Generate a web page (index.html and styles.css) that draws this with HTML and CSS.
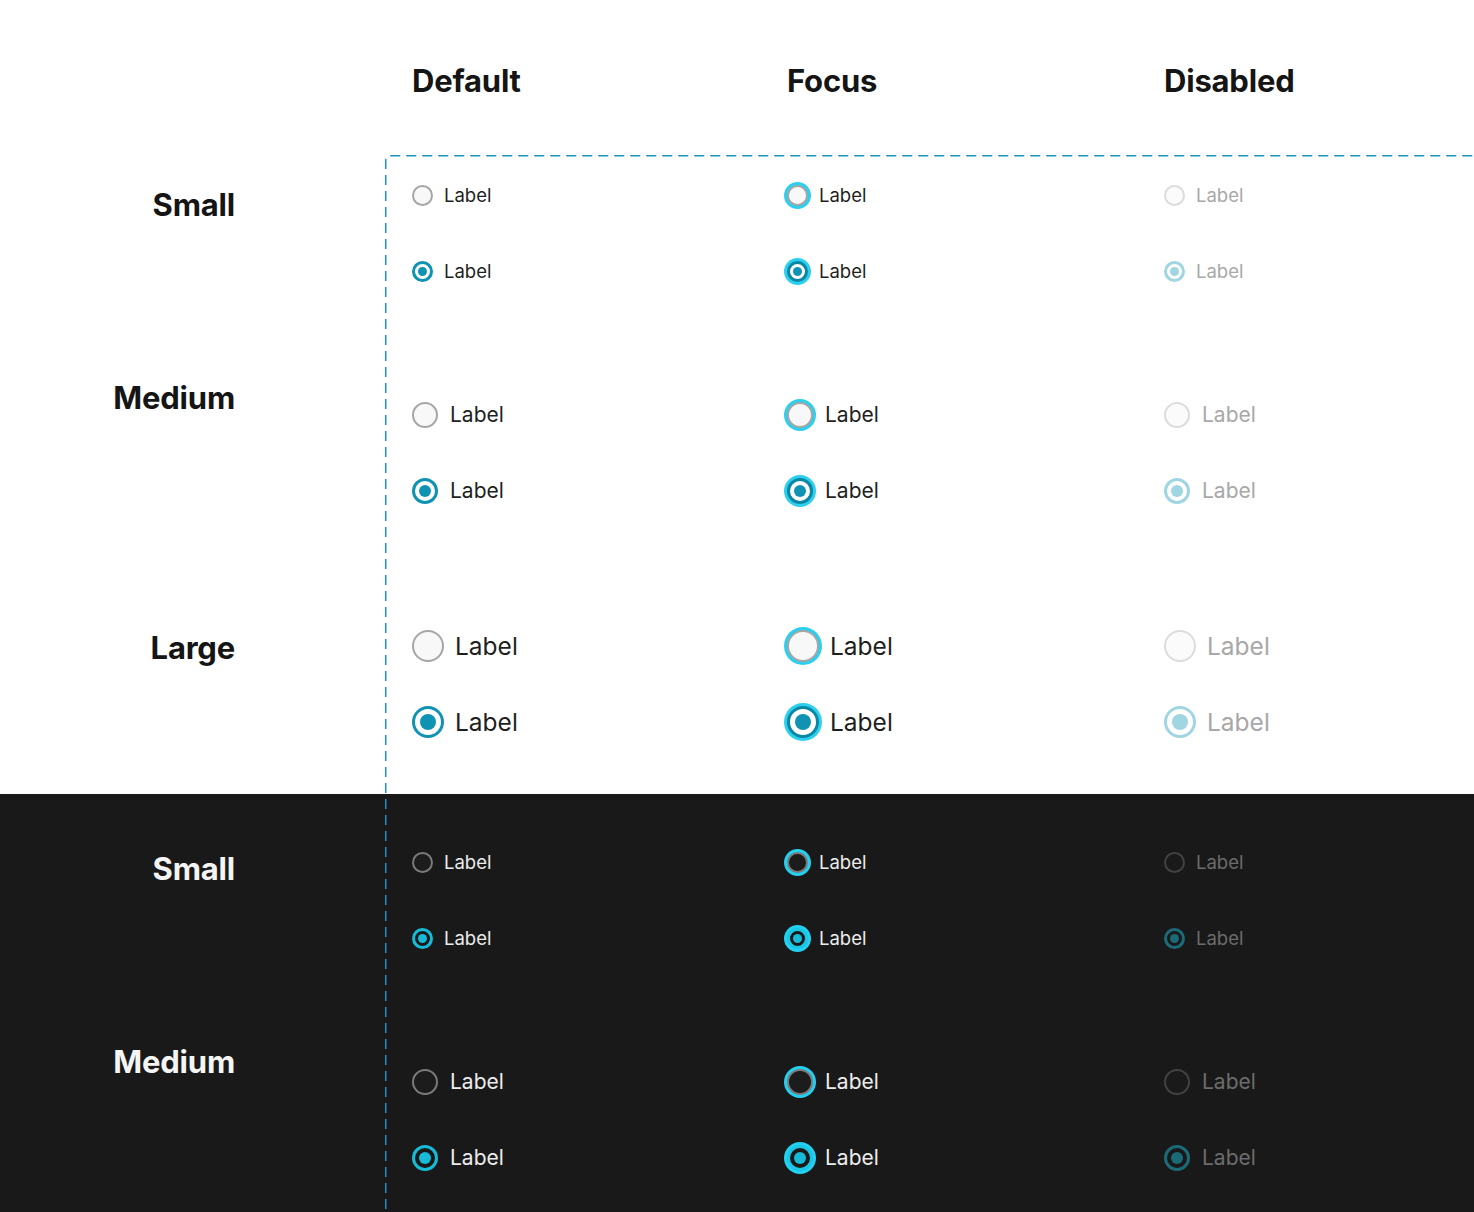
FILE: index.html
```html
<!DOCTYPE html>
<html lang="en">
<head>
<meta charset="utf-8">
<title>Radio</title>
<link rel="stylesheet" href="styles.css">
</head>
<body>
<div class="page">
  <svg class="frame" width="1100" height="1070" viewBox="0 0 1100 1070" aria-hidden="true">
    <path d="M0.75 1070 V5 Q0.75 0.75 5 0.75 H1100" fill="none" stroke="#1c93c2" stroke-width="1.5" stroke-dasharray="10 6"/>
  </svg>

  <section class="light">
    <header class="head">
      <h2 class="col-title">Default</h2>
      <h2 class="col-title">Focus</h2>
      <h2 class="col-title">Disabled</h2>
    </header>

    <div class="groups">
      <div class="group sm g-light-sm">
        <div class="group-label">Small</div>
        <div class="cells">
          <div class="cell"><span class="radio"></span><span class="label">Label</span></div>
          <div class="cell"><span class="radio focus"></span><span class="label">Label</span></div>
          <div class="cell disabled"><span class="radio"></span><span class="label">Label</span></div>
          <div class="cell"><span class="radio checked"></span><span class="label">Label</span></div>
          <div class="cell"><span class="radio checked focus"></span><span class="label">Label</span></div>
          <div class="cell disabled"><span class="radio checked"></span><span class="label">Label</span></div>
        </div>
      </div>

      <div class="group md g-light-md">
        <div class="group-label">Medium</div>
        <div class="cells">
          <div class="cell"><span class="radio"></span><span class="label">Label</span></div>
          <div class="cell"><span class="radio focus"></span><span class="label">Label</span></div>
          <div class="cell disabled"><span class="radio"></span><span class="label">Label</span></div>
          <div class="cell"><span class="radio checked"></span><span class="label">Label</span></div>
          <div class="cell"><span class="radio checked focus"></span><span class="label">Label</span></div>
          <div class="cell disabled"><span class="radio checked"></span><span class="label">Label</span></div>
        </div>
      </div>

      <div class="group lg g-light-lg">
        <div class="group-label">Large</div>
        <div class="cells">
          <div class="cell"><span class="radio"></span><span class="label">Label</span></div>
          <div class="cell"><span class="radio focus"></span><span class="label">Label</span></div>
          <div class="cell disabled"><span class="radio"></span><span class="label">Label</span></div>
          <div class="cell"><span class="radio checked"></span><span class="label">Label</span></div>
          <div class="cell"><span class="radio checked focus"></span><span class="label">Label</span></div>
          <div class="cell disabled"><span class="radio checked"></span><span class="label">Label</span></div>
        </div>
      </div>
    </div>
  </section>

  <section class="dark">
    <div class="group sm g-dark-sm">
      <div class="group-label">Small</div>
      <div class="cells">
        <div class="cell"><span class="radio"></span><span class="label">Label</span></div>
        <div class="cell"><span class="radio focus"></span><span class="label">Label</span></div>
        <div class="cell disabled"><span class="radio"></span><span class="label">Label</span></div>
        <div class="cell"><span class="radio checked"></span><span class="label">Label</span></div>
        <div class="cell"><span class="radio checked focus"></span><span class="label">Label</span></div>
        <div class="cell disabled"><span class="radio checked"></span><span class="label">Label</span></div>
      </div>
    </div>

    <div class="group md g-dark-md">
      <div class="group-label">Medium</div>
      <div class="cells">
        <div class="cell"><span class="radio"></span><span class="label">Label</span></div>
        <div class="cell"><span class="radio focus"></span><span class="label">Label</span></div>
        <div class="cell disabled"><span class="radio"></span><span class="label">Label</span></div>
        <div class="cell"><span class="radio checked"></span><span class="label">Label</span></div>
        <div class="cell"><span class="radio checked focus"></span><span class="label">Label</span></div>
        <div class="cell disabled"><span class="radio checked"></span><span class="label">Label</span></div>
      </div>
    </div>
  </section>
</div>
</body>
</html>
```

FILE: styles.css
```css
* { box-sizing: border-box; }

html, body {
  margin: 0;
  padding: 0;
  background: #ffffff;
}

body {
  font-family: Inter, "Noto Sans", "Liberation Sans", sans-serif;
  width: 1474px;
  height: 1212px;
  overflow: hidden;
}

.page {
  position: relative;
  width: 1474px;
  height: 1212px;
  overflow: hidden;
}

/* dashed component-set frame, drawn over both sections */
.frame {
  position: absolute;
  left: 384.5px;
  top: 154.5px;
  pointer-events: none;
  z-index: 2;
  display: block;
}

/* ---------- header ---------- */
.light {
  background: #ffffff;
  height: 794px;
}

.head {
  height: 155px;
  display: grid;
  grid-template-columns: 375px 377px 1fr;
  padding-left: 412px;
  padding-top: 63px;
}

.col-title {
  margin: 0;
  font-size: 31px;
  line-height: 36px;
  font-weight: 700;
  color: #151515;
  letter-spacing: -0.2px;
}

.groups {
  padding-top: 2px;
}

/* ---------- groups ---------- */
.group {
  display: flex;
}

.group-label {
  width: 235px;
  margin-right: 177px;
  text-align: right;
  font-size: 31px;
  line-height: 36px;
  font-weight: 700;
  color: #151515;
  letter-spacing: -0.2px;
}

.cells {
  display: grid;
  grid-template-columns: 375px 377px 1fr;
  grid-auto-rows: 76px;
  flex: 1;
}

.cell {
  display: flex;
  align-items: center;
}

.g-light-sm { margin-bottom: 68px; }
.g-light-sm .group-label { padding-top: 30px; }

.g-light-md { margin-bottom: 79px; }
.g-light-md .group-label { padding-top: 3px; }

.g-light-lg .group-label { padding-top: 22px; }

/* ---------- radio ---------- */
.radio {
  flex: none;
  display: flex;
  align-items: center;
  justify-content: center;
  border-radius: 50%;
  border: 2px solid #a6a6a6;
  background: #f8f8f8;
}

.radio.checked {
  border-color: #1092b3;
  background: #ffffff;
}

.radio.checked::after {
  content: "";
  display: block;
  border-radius: 50%;
  background: #1092b3;
}

.radio.focus {
  box-shadow: 0 0 0 3px #2dcfee;
}

.radio.checked.focus {
  border-color: #0b87a6;
}

.label {
  color: #1f1f1f;
  white-space: nowrap;
}

.disabled .radio {
  border-color: #dcdcdc;
  background: #fbfbfb;
}
.disabled .radio.checked {
  border-color: #a0d5e2;
  background: #ffffff;
}
.disabled .radio.checked::after {
  background: #a0d5e2;
}
.disabled .label {
  color: #a8a8a8;
}

/* sizes */
.sm .radio { width: 21px; height: 21px; }
.sm .radio.checked { border-width: 3px; }
.sm .radio.checked::after { width: 9px; height: 9px; }
.sm .label { margin-left: 11px; font-size: 18.5px; line-height: 24px; }

.md .radio { width: 26px; height: 26px; }
.md .radio.checked { border-width: 3px; }
.md .radio.checked::after { width: 12px; height: 12px; }
.md .label { margin-left: 12px; font-size: 21px; line-height: 28px; }

.lg .radio { width: 32px; height: 32px; border-width: 2.5px; }
.lg .radio.checked { border-width: 3px; }
.lg .radio.checked::after { width: 16px; height: 16px; }
.lg .label { margin-left: 11px; font-size: 24.5px; line-height: 32px; }

/* ---------- dark section ---------- */
.dark {
  background: #191919;
  height: 418px;
  padding-top: 30px;
}

.dark .group-label {
  color: #f5f5f5;
}

.g-dark-sm { margin-bottom: 68px; }
.g-dark-sm .group-label { padding-top: 27px; }
.g-dark-md .group-label { padding-top: 0; }

.dark .label { color: #ececec; }

.dark .radio {
  border-color: #7a7a7a;
  background: #1c1c1c;
}
.dark .radio.checked {
  border-color: #17bad7;
  background: #191919;
}
.dark .radio.checked::after { background: #17bad7; }
.dark .radio.focus { box-shadow: 0 0 0 3px #22d0ef; }
.dark .radio.checked.focus { border-color: #1bc6e4; }

.dark .disabled .radio {
  border-color: #424242;
  background: #1a1a1a;
}
.dark .disabled .radio.checked {
  border-color: #1b6a78;
  background: #191919;
}
.dark .disabled .radio.checked::after { background: #1b6a78; }
.dark .disabled .label { color: #6c6c6c; }
```
